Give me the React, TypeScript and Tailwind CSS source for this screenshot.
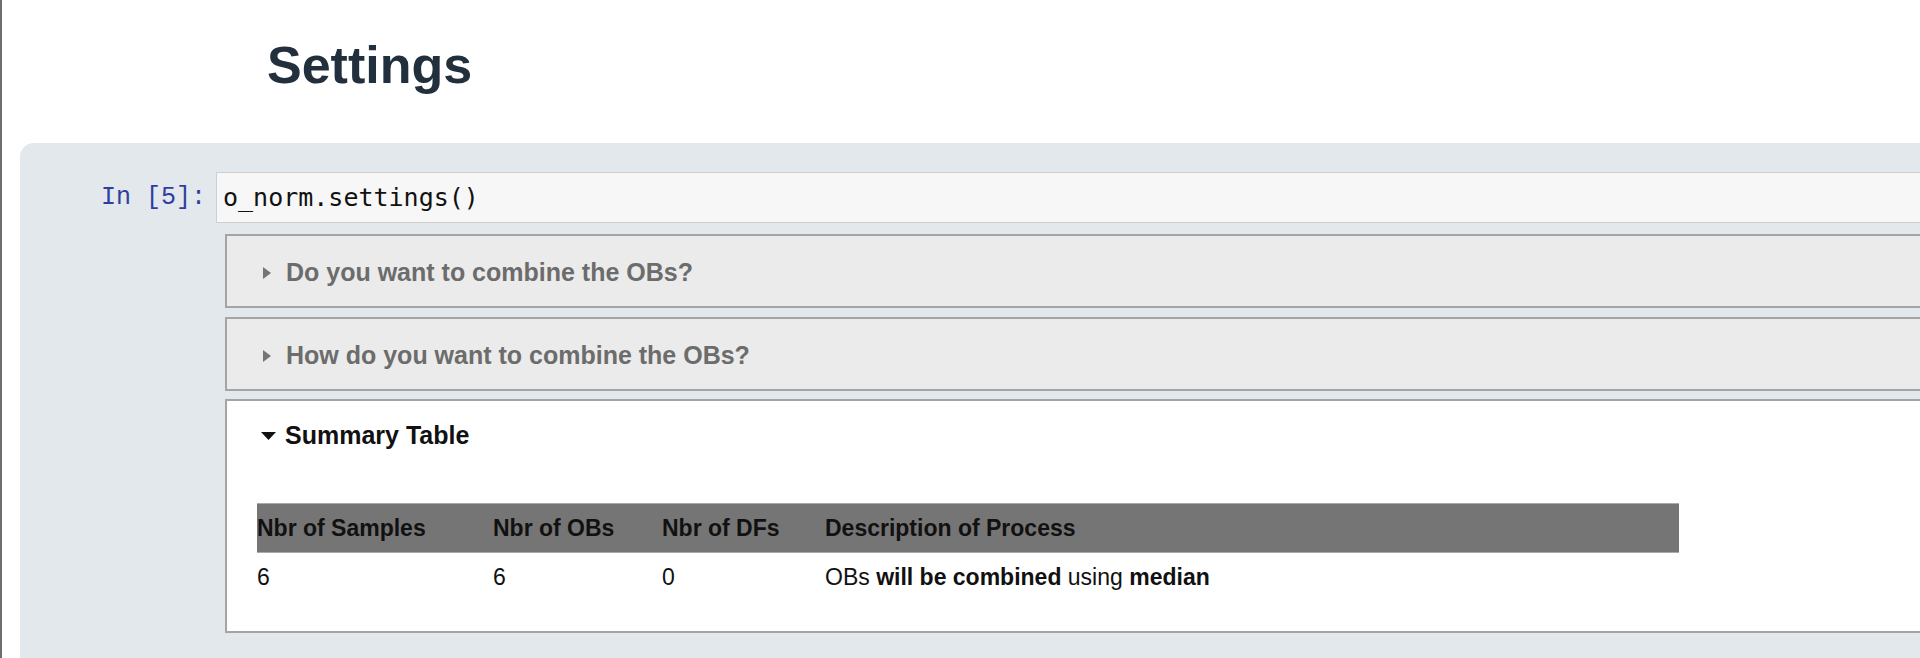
const rows = [
    { samples: "6", obs: "6", dfs: "0" },
];

function RightTriangle() {
    return (
        <svg width="8" height="12" viewBox="0 0 8 12" className="shrink-0">
            <polygon points="0,0 8,6 0,12" fill="#757575" />
        </svg>
    );
}

function DownTriangle() {
    return (
        <svg width="15" height="8" viewBox="0 0 15 8" className="shrink-0">
            <polygon points="0,0 15,0 7.5,8" fill="#111111" />
        </svg>
    );
}

function Accordion({ title }: { title: string }) {
    return (
        <div className="h-[74px] border-2 border-[#a4a4a4] bg-[#ebebeb] flex items-center gap-[15px] pl-[36px] pt-[4px]">
            <RightTriangle />
            <span className="text-[25px] font-bold text-[#6c6c6c]">{title}</span>
        </div>
    );
}

export default function App() {
    return (
        <div className="h-[658px] w-[1920px] overflow-hidden bg-white border-l-2 border-[#6e6e6e] flex flex-col font-['Liberation_Sans',Arial,sans-serif]">
            {/* Heading */}
            <h1 className="pl-[265px] pt-[35px] text-[52px] leading-[60px] font-bold text-[#22303d]">Settings</h1>

            {/* Notebook cell */}
            <div className="mt-[48px] ml-[18px] w-[1960px] flex-1 rounded-tl-[14px] bg-[#e2e8ec] pt-[29px]">
                <div className="flex">
                    <div className="w-[196px] h-[51px] flex items-center justify-end pr-[10px] font-['Liberation_Mono',monospace] text-[25px] text-[#303f9f]">
                        In [5]:
                    </div>
                    <div className="flex-1 h-[51px] flex items-center pl-[6px] bg-[#f7f7f7] border border-[#cfcfcf] font-['DejaVu_Sans_Mono',monospace] text-[25px] text-[#111111]">
                        o_norm.settings()
                    </div>
                </div>

                {/* Widget output */}
                <div className="ml-[205px] mt-[11px] flex flex-col">
                    <Accordion title="Do you want to combine the OBs?" />
                    <div className="mt-[9px]">
                        <Accordion title="How do you want to combine the OBs?" />
                    </div>
                    <div className="mt-[8px] h-[234px] border-2 border-[#a4a4a4] bg-white">
                        <div className="h-[70px] flex items-center gap-[9px] pl-[34px]">
                            <DownTriangle />
                            <span className="text-[25px] font-bold text-[#111111]">Summary Table</span>
                        </div>
                        <table className="mt-[32px] ml-[30px] w-[1422px] table-fixed text-[23px] text-[#111111]">
                            <colgroup>
                                <col className="w-[236px]" />
                                <col className="w-[169px]" />
                                <col className="w-[163px]" />
                                <col />
                            </colgroup>
                            <thead>
                                <tr className="h-[49px] bg-[#757575] border-y border-[#a9a9a9]">
                                    <th className="text-left font-bold p-0">Nbr of Samples</th>
                                    <th className="text-left font-bold p-0">Nbr of OBs</th>
                                    <th className="text-left font-bold p-0">Nbr of DFs</th>
                                    <th className="text-left font-bold p-0">Description of Process</th>
                                </tr>
                            </thead>
                            <tbody>
                                {rows.map((r, i) => (
                                    <tr key={i} className="h-[49px]">
                                        <td className="p-0">{r.samples}</td>
                                        <td className="p-0">{r.obs}</td>
                                        <td className="p-0">{r.dfs}</td>
                                        <td className="p-0">
                                            OBs <b>will be combined</b> using <b>median</b>
                                        </td>
                                    </tr>
                                ))}
                            </tbody>
                        </table>
                    </div>
                </div>
            </div>
        </div>
    );
}
